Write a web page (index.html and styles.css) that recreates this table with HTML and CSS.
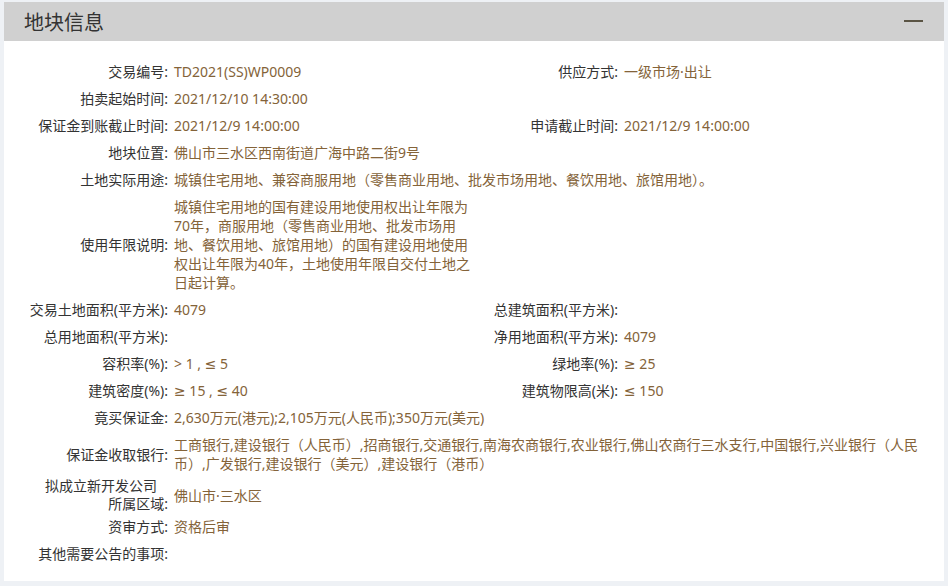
FILE: index.html
```html
<!DOCTYPE html>
<html lang="zh-CN">
<head>
  <meta charset="UTF-8" />
  <title>地块信息</title>
  <link rel="stylesheet" href="styles.css">
</head>
<body>

  <div class="panel">
    <div class="panel-head">
      <h2>地块信息</h2>
      <span class="collapse"></span>
    </div>

    <div class="panel-body">
      <table class="info">
        <colgroup>
          <col class="c-label">
          <col class="c-value">
          <col class="c-label2">
          <col class="c-value2">
        </colgroup>
        <tr>
          <th>交易编号:</th>
          <td>TD2021(SS)WP0009</td>
          <th>供应方式:</th>
          <td>一级市场·出让</td>
        </tr>
        <tr>
          <th>拍卖起始时间:</th>
          <td>2021/12/10 14:30:00</td>
          <th></th>
          <td></td>
        </tr>
        <tr>
          <th>保证金到账截止时间:</th>
          <td>2021/12/9 14:00:00</td>
          <th>申请截止时间:</th>
          <td>2021/12/9 14:00:00</td>
        </tr>
        <tr>
          <th>地块位置:</th>
          <td colspan="3">佛山市三水区西南街道广海中路二街9号</td>
        </tr>
        <tr>
          <th>土地实际用途:</th>
          <td colspan="3">城镇住宅用地、兼容商服用地（零售商业用地、批发市场用地、餐饮用地、旅馆用地）。</td>
        </tr>
        <tr>
          <th>使用年限说明:</th>
          <td>城镇住宅用地的国有建设用地使用权出让年限为70年，商服用地（零售商业用地、批发市场用地、餐饮用地、旅馆用地）的国有建设用地使用权出让年限为40年，土地使用年限自交付土地之日起计算。</td>
          <th></th>
          <td></td>
        </tr>
        <tr>
          <th>交易土地面积(平方米):</th>
          <td>4079</td>
          <th>总建筑面积(平方米):</th>
          <td></td>
        </tr>
        <tr>
          <th>总用地面积(平方米):</th>
          <td></td>
          <th>净用地面积(平方米):</th>
          <td>4079</td>
        </tr>
        <tr>
          <th>容积率(%):</th>
          <td>&gt; 1 , ≤ 5</td>
          <th>绿地率(%):</th>
          <td>≥ 25</td>
        </tr>
        <tr>
          <th>建筑密度(%):</th>
          <td>≥ 15 , ≤ 40</td>
          <th>建筑物限高(米):</th>
          <td>≤ 150</td>
        </tr>
        <tr>
          <th>竟买保证金:</th>
          <td colspan="3">2,630万元(港元);2,105万元(人民币);350万元(美元)</td>
        </tr>
        <tr>
          <th>保证金收取银行:</th>
          <td colspan="3">工商银行,建设银行（人民币）,招商银行,交通银行,南海农商银行,农业银行,佛山农商行三水支行,中国银行,兴业银行（人民币）,广发银行,建设银行（美元）,建设银行（港币）</td>
        </tr>
        <tr>
          <th class="tight"><span class="first-line">拟成立新开发公司</span>所属区域:</th>
          <td colspan="3">佛山市·三水区</td>
        </tr>
        <tr>
          <th>资审方式:</th>
          <td colspan="3">资格后审</td>
        </tr>
        <tr>
          <th>其他需要公告的事项:</th>
          <td colspan="3"></td>
        </tr>
      </table>
    </div>
  </div>

</body>
</html>
```

FILE: styles.css
```css
body {
  margin: 0;
  padding: 2px 4px 6px 4px;
  background: #eef1f5;
  font-family: "Noto Sans", "DejaVu Sans", "Noto Sans CJK SC", sans-serif;
  font-size: 14px;
  color: #333;
}

.panel {
  background: #fff;
  width: 940px;
}

/* шапка панелі */
.panel-head {
  background: #d0d0d0;
  height: 39px;
  display: flex;
  align-items: center;
  justify-content: space-between;
  padding: 0 21px 0 20px;
}
.panel-head h2 {
  margin: 0;
  font-size: 20px;
  font-weight: normal;
  color: #333;
  font-family: "Noto Sans CJK SC", sans-serif;
}
.collapse {
  width: 19px;
  height: 2px;
  background: #5a5444;
  margin-top: -2px;
}

.panel-body {
  padding: 17px 0 14px 4px;
}

/* таблиця з даними */
.info {
  border-collapse: collapse;
  table-layout: fixed;
  width: 916px;
  line-height: 19px;
}
.c-label { width: 160px; }
.c-value { width: 306px; }
.c-label2 { width: 144px; }
.c-value2 { width: 306px; }

.info th {
  font-weight: normal;
  text-align: right;
  color: #333;
  padding: 4px 0;
  vertical-align: middle;
  white-space: nowrap;
}
.info td {
  color: #846339;
  padding: 4px 0 4px 6px;
  vertical-align: middle;
}
.info th.tight {
  padding: 0;
  line-height: 18px;
}
.first-line {
  display: block;
  padding-right: 11px;
}
```
